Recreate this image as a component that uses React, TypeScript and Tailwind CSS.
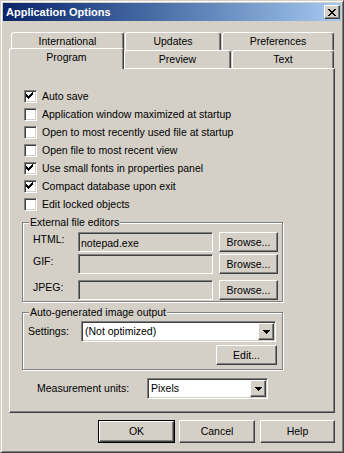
import type { ReactNode } from 'react';

const raised =
  'border border-t-white border-l-white border-r-[#404040] border-b-[#404040] shadow-[inset_-1px_-1px_0_#808080]';
const sunken =
  'border border-t-[#808080] border-l-[#808080] border-r-white border-b-white shadow-[inset_1px_1px_0_#404040,inset_-1px_-1px_0_#d4d0c8]';

// classic 7x7 check mark, pixel columns
const checkCols: [number, number][] = [
  [3, 5],
  [4, 6],
  [5, 7],
  [6, 6],
  [7, 5],
  [8, 4],
  [9, 3],
];

function CheckRow({ label, checked }: { label: string; checked?: boolean }) {
  return (
    <div className="flex items-center h-[18px]">
      <div className={`w-[13px] h-[13px] bg-white shrink-0 relative ${sunken}`}>
        {checked && (
          <svg width="13" height="13" viewBox="0 0 13 13" className="absolute -left-px -top-px" shapeRendering="crispEdges">
            {checkCols.map(([x, y]) => (
              <rect key={x} x={x - 1} y={y - 1} width="1" height="3" fill="#000" />
            ))}
          </svg>
        )}
      </div>
      <span className="ml-[5px]">{label}</span>
    </div>
  );
}

function Tab({ label, w, h, selected }: { label: string; w: number; h: number; selected?: boolean }) {
  return (
    <div
      style={{ width: w, height: h }}
      className={`flex justify-center items-center rounded-t-[3px] border-t border-l border-r border-t-white border-l-white border-r-[#404040] shadow-[inset_-1px_0_0_#808080] bg-[#d4d0c8] ${
        selected ? 'relative z-10 pb-[3px]' : ''
      }`}
    >
      {label}
    </div>
  );
}

function Button({ children, className = '' }: { children: ReactNode; className?: string }) {
  return <div className={`flex items-center justify-center bg-[#d4d0c8] ${raised} ${className}`}>{children}</div>;
}

function DropArrow() {
  return (
    <div className={`w-[16px] h-[17px] flex items-center justify-center bg-[#d4d0c8] ${raised}`}>
      <svg width="7" height="4" viewBox="0 0 7 4" shapeRendering="crispEdges">
        <path d="M0 0h7v1h-1v1h-1v1h-1v1h-1v-1h-1v-1h-1v-1h-1z" fill="#000" />
      </svg>
    </div>
  );
}

function Group({ title, children, className = '' }: { title: string; children: ReactNode; className?: string }) {
  return (
    <div
      className={`relative ml-[12px] w-[261px] border border-[#808080] shadow-[inset_1px_1px_0_white,1px_1px_0_white] ${className}`}
    >
      <span className="absolute -top-[7px] left-[6px] px-[1px] bg-[#d4d0c8] leading-[13px]">{title}</span>
      {children}
    </div>
  );
}

function FileRow({ label, value, className = '' }: { label: string; value?: string; className?: string }) {
  return (
    <div className={`flex items-center ${className}`}>
      <span className="w-[45px] -mt-[5px]">{label}</span>
      <div className={`w-[135px] h-[20px] bg-[#d4d0c8] flex items-center pl-[2px] pt-[2px] ${sunken}`}>{value}</div>
      <Button className="ml-[6px] w-[59px] h-[20px]">Browse...</Button>
    </div>
  );
}

export default function App() {
  return (
    <div className="w-[344px] h-[453px] bg-[#d4d0c8] p-[2px] border border-t-[#d4d0c8] border-l-[#d4d0c8] border-r-[#404040] border-b-[#404040] shadow-[inset_1px_1px_0_white,inset_-1px_-1px_0_#808080] font-['Liberation_Sans',Arial,sans-serif] text-[10.5px] leading-[13px] text-black flex flex-col">
      {/* Title bar */}
      <div className="h-[18px] flex items-center bg-gradient-to-r from-[#0a246a] to-[#a6caf0] pl-[3px] pr-[1px]">
        <span className="text-white font-bold text-[11px] flex-1">Application Options</span>
        <div className={`w-[16px] h-[14px] flex items-center justify-center bg-[#d4d0c8] ${raised}`}>
          <svg width="8" height="7" viewBox="0 0 8 7" shapeRendering="crispEdges">
            <path
              d="M0 0h2v1h1v1h2v-1h1v-1h2v1h-1v1h-1v1h-1v1h1v1h1v1h1v1h-2v-1h-1v-1h-2v1h-1v1h-2v-1h1v-1h1v-1h1v-1h-1v-1h-1v-1h-1z"
              fill="#000"
            />
          </svg>
        </div>
      </div>

      {/* Tabs */}
      <div className="mt-[11px] flex pl-[8px] gap-[1px] h-[18px]">
        <Tab label="International" w={113} h={18} />
        <Tab label="Updates" w={96} h={18} />
        <Tab label="Preferences" w={112} h={18} />
      </div>
      <div className="-mt-[2px] flex items-start pl-[6px] h-[20px]">
        <Tab label="Program" w={115} h={21} selected />
        <div className="flex gap-[1px] mt-[2px]">
          <Tab label="Preview" w={107} h={18} />
          <Tab label="Text" w={102} h={18} />
        </div>
      </div>

      {/* Panel */}
      <div className="ml-[6px] w-[326px] h-[345px] border border-t-white border-l-white border-r-[#404040] border-b-[#404040] shadow-[inset_-1px_-1px_0_#808080] flex flex-col">
        <div className="pt-[18px] pl-[14px] flex flex-col">
          <CheckRow label="Auto save" checked />
          <CheckRow label="Application window maximized at startup" />
          <CheckRow label="Open to most recently used file at startup" />
          <CheckRow label="Open file to most recent view" />
          <CheckRow label="Use small fonts in properties panel" checked />
          <CheckRow label="Compact database upon exit" checked />
          <CheckRow label="Edit locked objects" />
        </div>

        <Group title="External file editors" className="mt-[9px] pt-[9px] pl-[10px] pb-[1px]">
          <FileRow label="HTML:" value="notepad.exe" />
          <FileRow label="GIF:" className="mt-[2px]" />
          <FileRow label="JPEG:" className="mt-[6px]" />
        </Group>

        <Group title="Auto-generated image output" className="mt-[10px] pt-[8px] pl-[5px] pb-[4px]">
          <div className="flex items-center">
            <span className="w-[53px]">Settings:</span>
            <div className={`w-[195px] h-[21px] bg-white flex items-center justify-between pl-[3px] pr-px ${sunken}`}>
              <span>(Not optimized)</span>
              <DropArrow />
            </div>
          </div>
          <div className="flex mt-[3px] pl-[188px]">
            <Button className="w-[61px] h-[20px]">Edit...</Button>
          </div>
        </Group>

        <div className="mt-[8px] pl-[27px] flex items-center">
          <span className="w-[110px]">Measurement units:</span>
          <div className={`w-[121px] h-[21px] bg-white flex items-center justify-between pl-[3px] pr-px ${sunken}`}>
            <span>Pixels</span>
            <DropArrow />
          </div>
        </div>
      </div>

      {/* Buttons */}
      <div className="mt-[7px] flex pl-[95px]">
        <div className="w-[77px] h-[23px] border border-black flex">
          <Button className="flex-1">OK</Button>
        </div>
        <Button className="ml-[4px] w-[76px] h-[23px]">Cancel</Button>
        <Button className="ml-[5px] w-[75px] h-[23px]">Help</Button>
      </div>
    </div>
  );
}
